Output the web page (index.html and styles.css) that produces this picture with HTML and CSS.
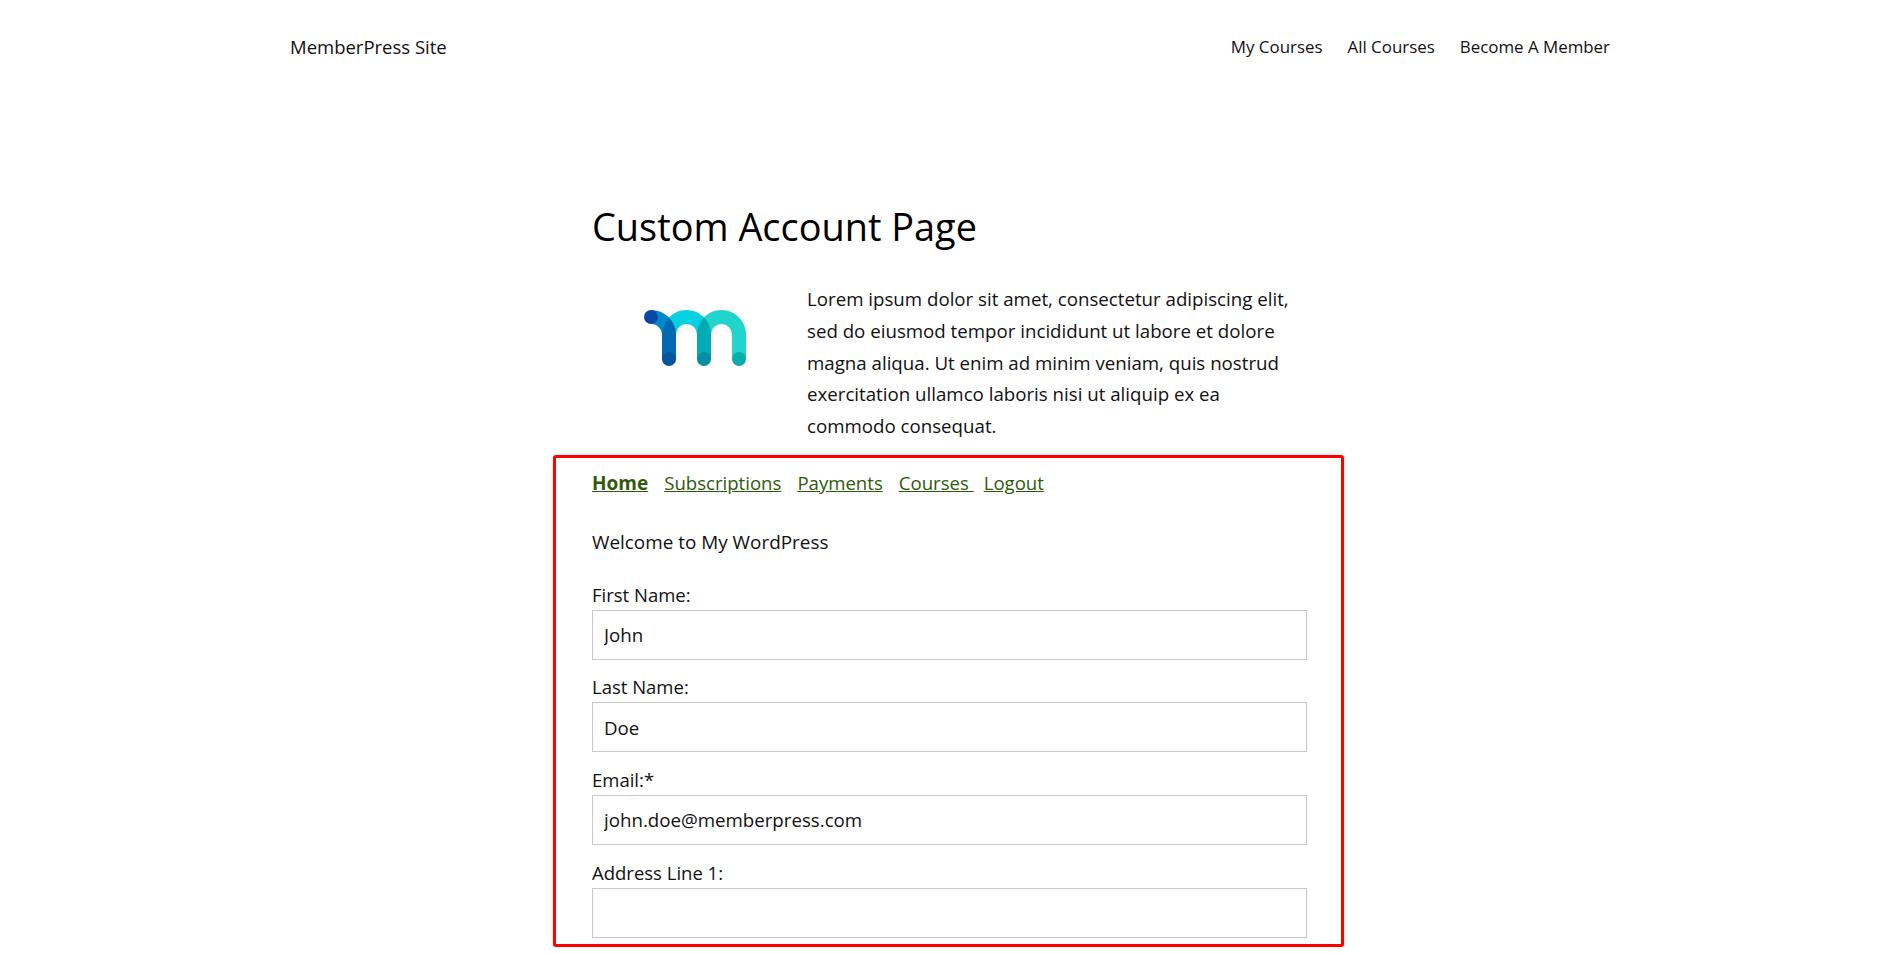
FILE: index.html
```html
<!DOCTYPE html>
<html lang="en">

<head>
    <meta charset="UTF-8">
    <meta name="viewport" content="width=device-width, initial-scale=1.0">
    <title>Custom Account Page</title>
    <link rel="stylesheet" href="styles.css">
</head>

<body>
    <header class="site-header">
        <a class="site-title" href="#">MemberPress Site</a>
        <nav class="site-nav">
            <a href="#">My Courses</a>
            <a href="#">All Courses</a>
            <a href="#">Become A Member</a>
        </nav>
    </header>

    <main class="content">
        <h1>Custom Account Page</h1>

        <div class="intro">
            <div class="intro-logo">
                <svg width="102" height="56" viewBox="0 0 102 56" aria-hidden="true">
                    <path d="M7 7 A18 18 0 0 1 25 25" fill="none" stroke="#0088cc" stroke-width="14" />
                    <path d="M25 24.5 A17.5 17.5 0 0 1 60 24.5" fill="none" stroke="#07d0e2" stroke-width="14" />
                    <path d="M60 24.5 A17.5 17.5 0 0 1 95 24.5 V49" fill="none" stroke="#22d5cc" stroke-width="14" />
                    <path d="M18 49 V24.5 A24.5 24.5 0 0 1 25 7.4 A25 25 0 0 1 32 25 V49 Z" fill="#0069b4" />
                    <path d="M53 49 V24.5 A24.5 24.5 0 0 1 60 7.4 A24.5 24.5 0 0 1 67 24.5 V49 Z" fill="#02abb3" />
                    <circle cx="7" cy="7" r="7" fill="#0a47a3" />
                    <circle cx="25" cy="49" r="7" fill="#05549f" />
                    <circle cx="60" cy="49" r="7" fill="#018fa3" />
                    <circle cx="95" cy="49" r="7" fill="#0cada6" />
                </svg>
            </div>
            <p>Lorem ipsum dolor sit amet, consectetur adipiscing elit, sed do eiusmod tempor incididunt ut labore et dolore magna aliqua. Ut enim ad minim veniam, quis nostrud exercitation ullamco laboris nisi ut aliquip ex ea commodo consequat.</p>
        </div>

        <div class="account-box">
            <nav class="account-nav">
                <a class="active" href="#">Home</a>
                <a href="#">Subscriptions</a>
                <a href="#">Payments</a>
                <a class="courses" href="#">Courses&nbsp;</a>
                <a href="#">Logout</a>
            </nav>

            <p class="welcome">Welcome to My WordPress</p>

            <form class="account-form">
                <div class="field">
                    <label for="firstName">First Name:</label>
                    <input type="text" id="firstName" value="John">
                </div>
                <div class="field">
                    <label for="lastName">Last Name:</label>
                    <input type="text" id="lastName" value="Doe">
                </div>
                <div class="field">
                    <label for="email">Email:*</label>
                    <input type="text" id="email" value="john.doe@memberpress.com">
                </div>
                <div class="field">
                    <label for="address1">Address Line 1:</label>
                    <input type="text" id="address1">
                </div>
            </form>
        </div>
    </main>
</body>

</html>
```

FILE: styles.css
```css
body {
    font-family: "Open Sans", "Noto Sans", Arial, sans-serif;
    margin: 0;
    padding: 0;
    background-color: #fff;
    color: #111;
    font-size: 18px;
}

a {
    color: inherit;
    text-decoration: none;
}

.site-header {
    display: flex;
    justify-content: space-between;
    align-items: center;
    height: 92px;
    padding: 0 293px 0 290px;
}

.site-title {
    font-size: 18.5px;
}

.site-nav {
    display: flex;
    gap: 25px;
    font-size: 16.9px;
}

.content {
    width: 715px;
    margin-left: 592px;
}

h1 {
    font-size: 37.9px;
    font-weight: 400;
    line-height: 50px;
    margin: 109px 0 0;
    color: #000;
}

.intro {
    display: flex;
    margin-top: 32px;
}

.intro-logo {
    width: 215px;
    flex-shrink: 0;
    padding: 27px 0 0 52px;
    box-sizing: border-box;
}

.intro p {
    margin: 0;
    font-size: 18.7px;
    line-height: 31.8px;
}

.account-box {
    margin: 13px -37px 0 -39px;
    padding: 10px 34px 0 36px;
    height: 492px;
    box-sizing: border-box;
    border: 3px solid #f00;
    border-radius: 3px;
    box-shadow: 0 0 3px rgba(0, 0, 0, 0.2);
    overflow: hidden;
}

.account-nav {
    display: flex;
    font-size: 18.6px;
    line-height: 30px;
    color: #2f5a0b;
}

.account-nav a {
    margin-right: 16px;
    text-decoration: underline;
}

.account-nav .active {
    font-size: 19px;
    font-weight: 700;
}

.account-nav .courses {
    margin-right: 10px;
}

.welcome {
    margin: 29px 0 0;
    font-size: 18.9px;
    line-height: 30px;
}

.account-form {
    margin-top: 22.6px;
}

.field {
    margin-bottom: 12.7px;
}

.field label {
    display: block;
    font-size: 18.5px;
    line-height: 30px;
}

.field input {
    display: block;
    width: 100%;
    height: 50px;
    box-sizing: border-box;
    border: 1px solid #c8c8c8;
    padding: 0 11px;
    font-family: inherit;
    font-size: 18.7px;
    color: #111;
}
```
